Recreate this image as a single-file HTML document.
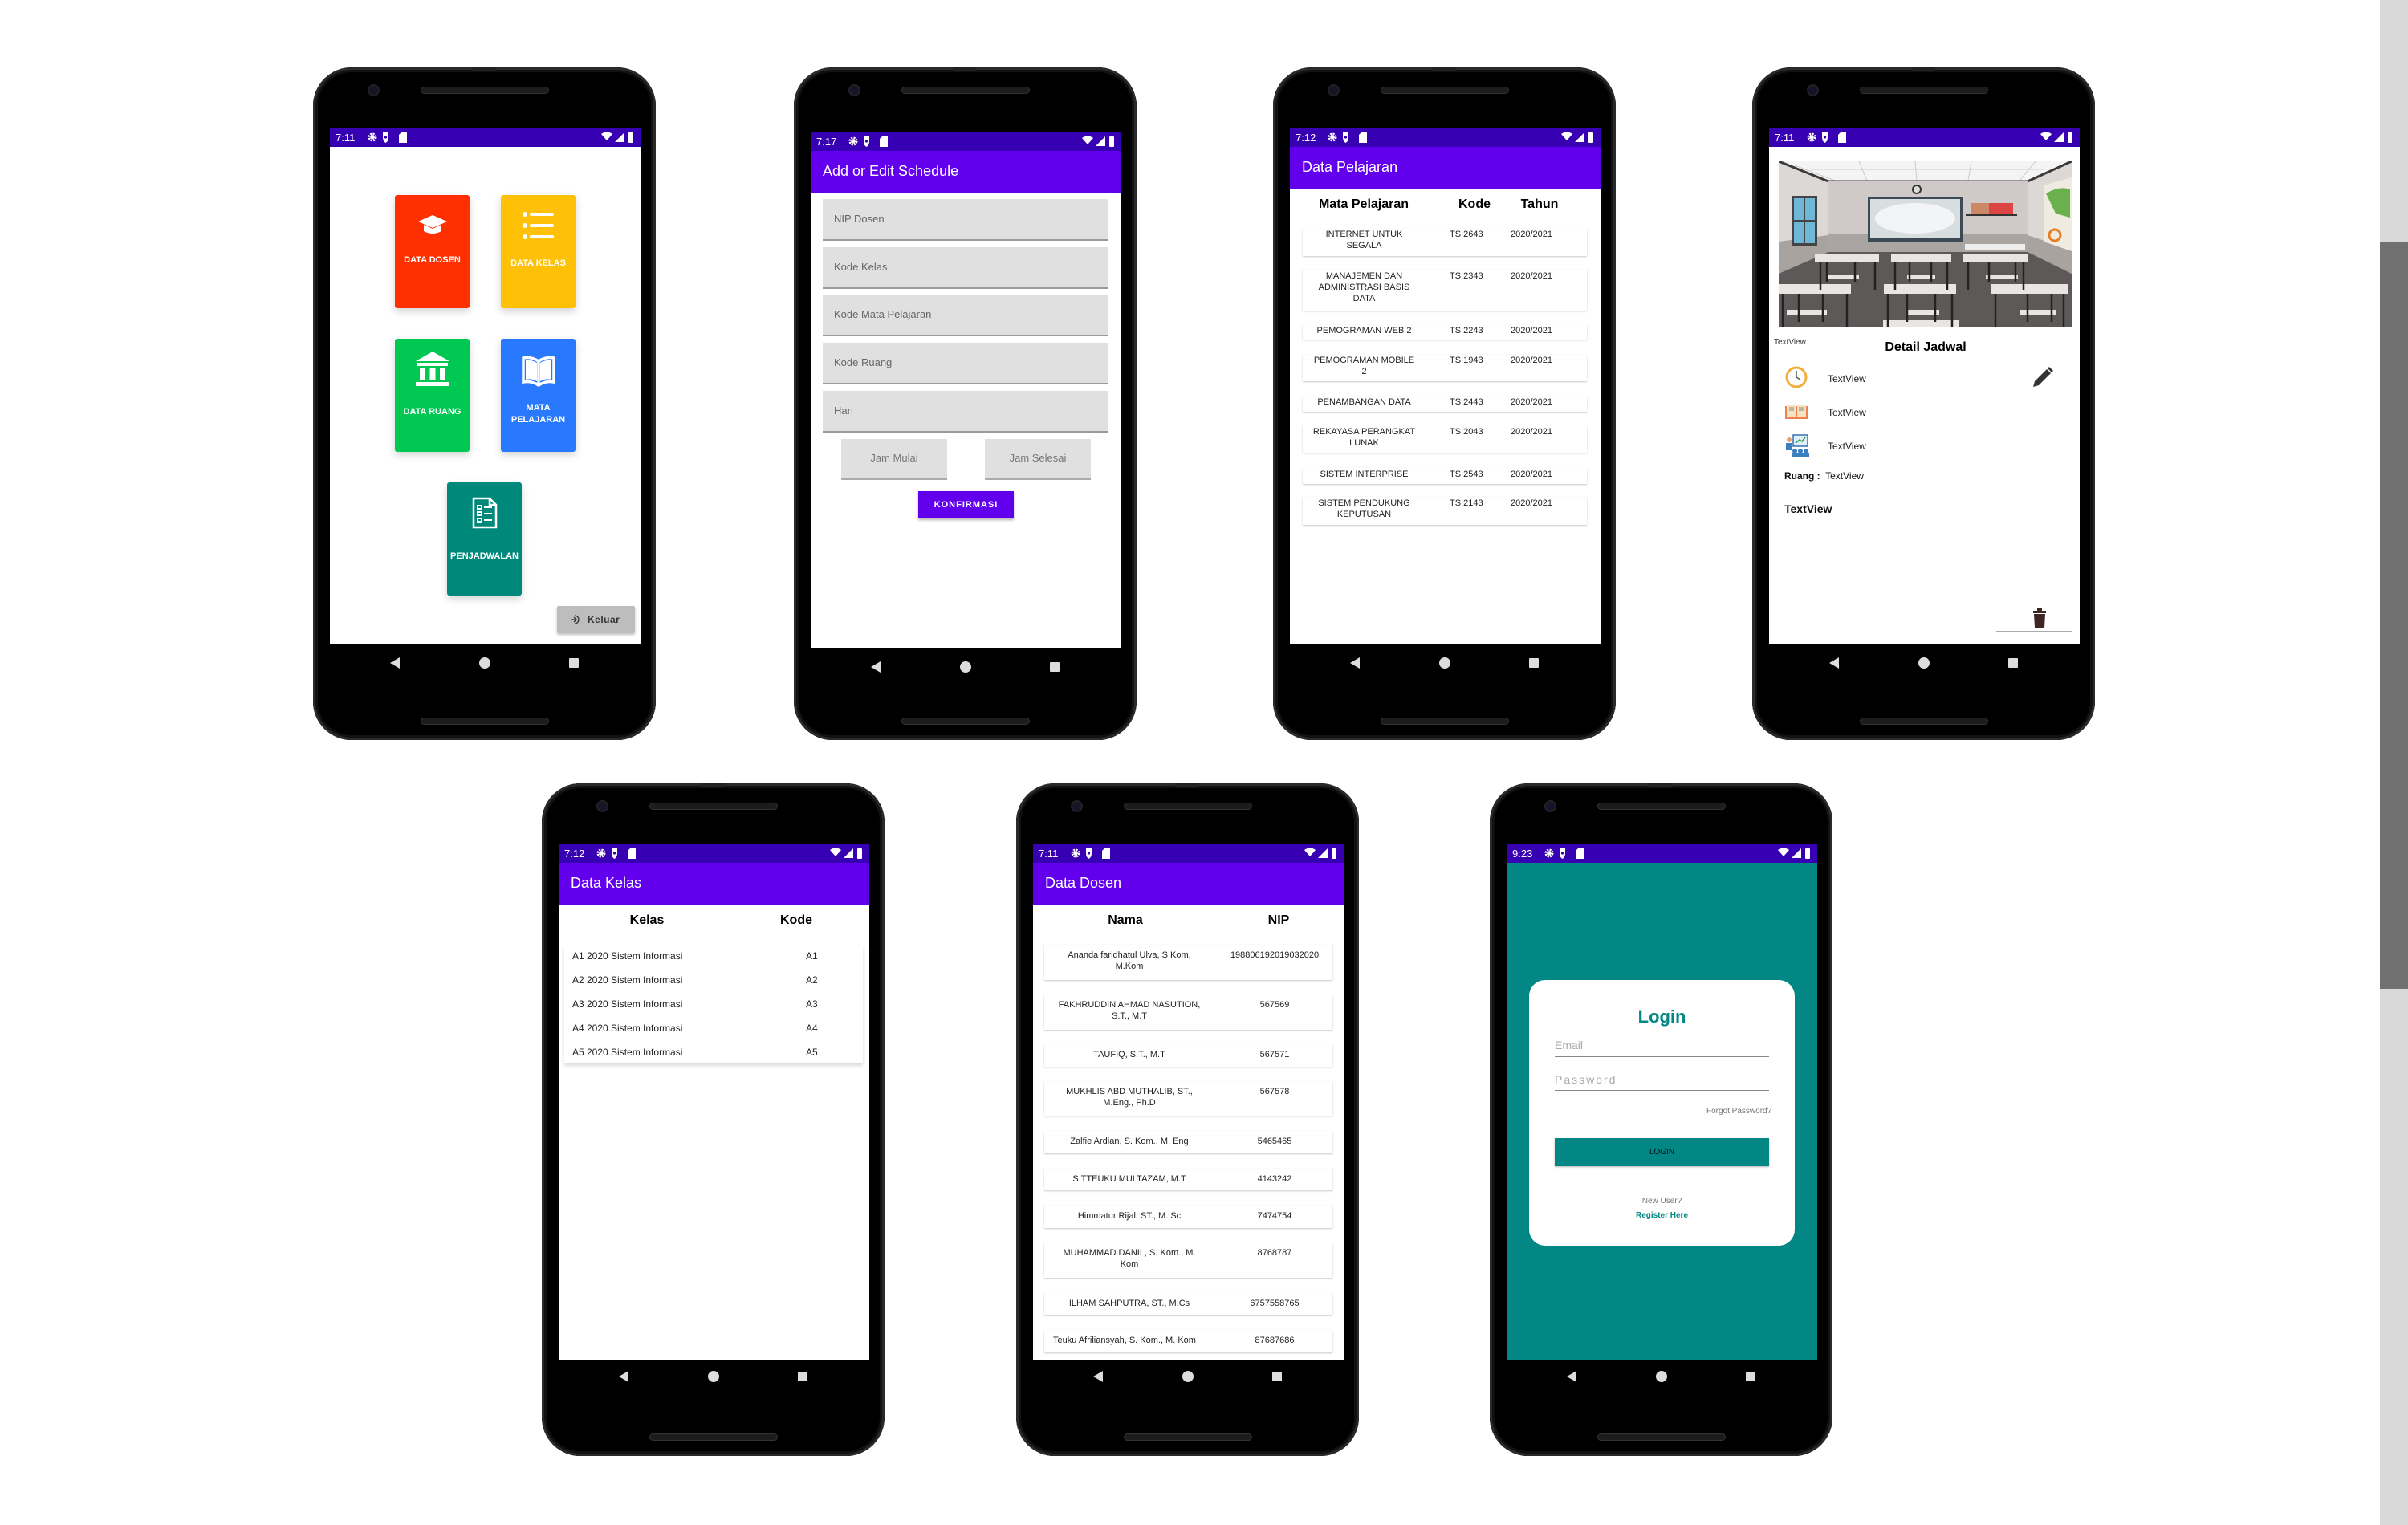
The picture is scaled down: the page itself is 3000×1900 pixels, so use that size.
<!DOCTYPE html>
<html><head><meta charset="utf-8">
<style>
*{box-sizing:border-box;margin:0;padding:0}
body{width:3000px;height:1900px;background:#fff;position:relative;overflow:hidden;font-family:"Liberation Sans",Arial,sans-serif}
.ph{position:absolute;width:427px;height:838px;background:#000;border-radius:48px;box-shadow:inset 0 0 0 3px #2a2a2a,inset 0 0 0 6px #111}
.ph .spk{position:absolute;left:134px;top:24px;width:160px;height:9px;border-radius:5px;background:#1c1c1c;border:1px solid #333}
.ph .spkb{top:810px}
.ph .cam{position:absolute;left:68px;top:21px;width:15px;height:15px;border-radius:50%;background:#15152a;border:2px solid #222}
.ph .tab{position:absolute;left:198px;top:0;width:30px;height:5px;background:#222;border-radius:0 0 4px 4px}
.scr{position:absolute;left:21px;top:76px;width:387px;height:642px;background:#fff;overflow:hidden}
.sb{position:absolute;left:0;top:0;width:100%;height:23px;background:#3700b3;color:#fff;font-size:13px}
.sb .t{position:absolute;left:7px;top:4px}
.ab{position:absolute;left:0;top:23px;width:100%;height:53px;background:#6200ee;color:#fff;font-size:18px;padding:15px 0 0 15px}
.nav{position:absolute;top:732px;left:0;width:427px;height:20px}
.a{position:absolute}
.c{position:absolute;text-align:center}
.card{position:absolute;background:#fff;box-shadow:0 1px 2px rgba(0,0,0,.22)}
.tile{position:absolute;width:93px;height:141px;border-radius:3px;box-shadow:0 4px 10px rgba(0,0,0,.18);color:#fff;font-weight:bold;font-size:11px;text-align:center}
.fld{position:absolute;left:15px;width:356px;height:52px;background:#e0e0e0;border-bottom:2px solid #9a9a9a;color:#666;font-size:13px;padding:17px 0 0 14px}
.btn{position:absolute;height:51px;width:132px;background:#e0e0e0;border-bottom:2px solid #aaa;color:#777;font-size:13px;text-align:center;padding-top:16px}
.r{font-size:11px;color:#222;line-height:14px}
</style></head><body>

<svg width="0" height="0" style="position:absolute">
<defs>
<g id="sbar">
<circle cx="53" cy="11" r="4" fill="none" stroke="#fff" stroke-width="3" stroke-dasharray="2 1.2"/><circle cx="53" cy="11" r="2.5" fill="#fff"/>
<path d="M66 5 L73 5 L73 11 Q73 16 69.5 18 Q66 16 66 11Z" fill="#fff"/><circle cx="69.5" cy="11" r="1.6" fill="#3700b3"/>
<path d="M89 5 H96 V18 H86 V8Z" fill="#fff"/>
<path d="M338 7 Q345 2 352 7 L345 15Z" fill="#fff"/>
<path d="M367 5 V17 H355Z" fill="#fff"/>
<rect x="372" y="5" width="6" height="13" rx="1" fill="#fff"/>
</g>
<g id="navg">
<path d="M108 -7 V7 L96 0Z" fill="#ddd"/><circle cx="214" cy="0" r="7" fill="#ddd"/><rect x="319" y="-6" width="12" height="12" rx="1" fill="#ddd"/>
</g>
</defs>
</svg>

<div class="a" style="left:2965px;top:0;width:35px;height:1900px;background:#d9d9d9"></div>
<div class="a" style="left:2965px;top:302px;width:35px;height:930px;background:#717171"></div>

<!-- PHONE 1 -->
<div class="ph" style="left:390px;top:84px"><div class="tab"></div><div class="cam"></div><div class="spk"></div><div class="spk spkb"></div>
<div class="scr">
<div class="sb"><span class="t">7:11</span><svg width="387" height="23" style="position:absolute;left:0;top:0"><use href="#sbar"/></svg></div>
<div class="tile" style="left:81px;top:83px;background:#ff2f00"><svg width="40" height="30" style="margin-top:22px" viewBox="0 0 40 30"><path d="M2 11 L20 3 L38 11 L20 19Z" fill="#fff"/><path d="M9 15 V23 Q20 29 31 23 V15 L20 20Z" fill="#fff"/></svg><div style="margin-top:20px">DATA DOSEN</div></div>
<div class="tile" style="left:213px;top:83px;background:#ffc107"><svg width="46" height="40" style="margin-top:18px" viewBox="0 0 46 40"><g fill="#fff"><circle cx="6" cy="6" r="3"/><circle cx="6" cy="20" r="3"/><circle cx="6" cy="34" r="3"/><rect x="12" y="4" width="30" height="4" rx="2"/><rect x="12" y="18" width="30" height="4" rx="2"/><rect x="12" y="32" width="30" height="4" rx="2"/></g></svg><div style="margin-top:18px">DATA KELAS</div></div>
<div class="tile" style="left:81px;top:262px;background:#00c853"><svg width="46" height="48" style="margin-top:14px" viewBox="0 0 46 48"><g fill="#fff"><path d="M23 2 L44 14 H2Z"/><rect x="4" y="16" width="38" height="4"/><rect x="7" y="22" width="7" height="16"/><rect x="19.5" y="22" width="7" height="16"/><rect x="32" y="22" width="7" height="16"/><rect x="2" y="40" width="42" height="5"/></g></svg><div style="margin-top:20px">DATA RUANG</div></div>
<div class="tile" style="left:213px;top:262px;background:#2979ff"><svg width="46" height="40" style="margin-top:20px" viewBox="0 0 46 40"><path d="M23 8 Q14 2 4 4 V34 Q14 32 23 38 Q32 32 42 34 V4 Q32 2 23 8Z M23 8 V38" fill="none" stroke="#fff" stroke-width="3.5"/><path d="M7 7 Q14 6 21 10 V33 Q14 29 7 31Z M25 10 Q32 6 39 7 V31 Q32 29 25 33Z" fill="#fff"/></svg><div style="margin-top:16px;line-height:15px">MATA<br>PELAJARAN</div></div>
<div class="tile" style="left:146px;top:441px;background:#00897b"><svg width="34" height="42" style="margin-top:17px" viewBox="0 0 34 42"><path d="M3 3 H23 L31 11 V39 H3Z M23 3 V11 H31" fill="none" stroke="#fff" stroke-width="2.5"/><g fill="none" stroke="#fff" stroke-width="2"><rect x="8" y="12" width="5" height="4"/><rect x="8" y="20" width="5" height="4"/><rect x="8" y="28" width="5" height="4"/><path d="M16 14 H26 M16 22 H26 M16 30 H26"/></g></svg><div style="margin-top:24px">PENJADWALAN</div></div>
<div class="a" style="left:283px;top:595px;width:97px;height:34px;background:#bdbdbd;border-radius:2px;box-shadow:0 2px 3px rgba(0,0,0,.25);font-size:12px;font-weight:bold;color:#333;padding:10px 0 0 38px;letter-spacing:.5px"><svg width="14" height="14" viewBox="0 0 14 14" style="position:absolute;left:16px;top:10px"><path d="M6 2 A5 5 0 1 1 6 12 M1 7 H8 M5 4 L8 7 L5 10" fill="none" stroke="#333" stroke-width="1.3"/></svg>Keluar</div>
</div>
<svg class="nav" viewBox="0 -10 427 20"><use href="#navg"/></svg>
</div>

<!-- PHONE 2 -->
<div class="ph" style="left:989px;top:84px"><div class="tab"></div><div class="cam"></div><div class="spk"></div><div class="spk spkb"></div>
<div class="scr" style="top:81px">
<div class="sb"><span class="t">7:17</span><svg width="387" height="23" style="position:absolute;left:0;top:0"><use href="#sbar"/></svg></div>
<div class="ab">Add or Edit Schedule</div>
<div class="fld" style="top:83px">NIP Dosen</div>
<div class="fld" style="top:143px">Kode Kelas</div>
<div class="fld" style="top:202px">Kode Mata Pelajaran</div>
<div class="fld" style="top:262px">Kode Ruang</div>
<div class="fld" style="top:322px">Hari</div>
<div class="btn" style="left:38px;top:382px">Jam Mulai</div>
<div class="btn" style="left:217px;top:382px">Jam Selesai</div>
<div class="a" style="left:134px;top:447px;width:119px;height:34px;background:#6200ee;color:#fff;font-size:11px;font-weight:bold;letter-spacing:1px;text-align:center;padding-top:11px;box-shadow:0 2px 3px rgba(0,0,0,.3)">KONFIRMASI</div>
</div>
<svg class="nav" style="top:737px" viewBox="0 -10 427 20"><use href="#navg"/></svg>
</div>

<!-- PHONE 3 -->
<div class="ph" style="left:1586px;top:84px"><div class="tab"></div><div class="cam"></div><div class="spk"></div><div class="spk spkb"></div>
<div class="scr">
<div class="sb"><span class="t">7:12</span><svg width="387" height="23" style="position:absolute;left:0;top:0"><use href="#sbar"/></svg></div>
<div class="ab">Data Pelajaran</div>
<div class="c" style="left:12px;width:160px;top:86px;font-size:16px;font-weight:bold">Mata Pelajaran</div>
<div class="c" style="left:200px;width:60px;top:86px;font-size:16px;font-weight:bold">Kode</div>
<div class="c" style="left:276px;width:70px;top:86px;font-size:16px;font-weight:bold">Tahun</div>
<div class="card" style="left:16px;top:125px;width:354px;height:34px"></div>
<div class="card" style="left:16px;top:176px;width:354px;height:51px"></div>
<div class="card" style="left:16px;top:245px;width:354px;height:18px"></div>
<div class="card" style="left:16px;top:282px;width:354px;height:33px"></div>
<div class="card" style="left:16px;top:334px;width:354px;height:19px"></div>
<div class="card" style="left:16px;top:370px;width:354px;height:34px"></div>
<div class="card" style="left:16px;top:423px;width:354px;height:20px"></div>
<div class="card" style="left:16px;top:459px;width:354px;height:35px"></div>
<div class="c r" style="left:20px;width:145px;top:125px">INTERNET UNTUK<br>SEGALA</div>
<div class="c r" style="left:20px;width:145px;top:177px">MANAJEMEN DAN<br>ADMINISTRASI BASIS<br>DATA</div>
<div class="c r" style="left:20px;width:145px;top:245px">PEMOGRAMAN WEB 2</div>
<div class="c r" style="left:20px;width:145px;top:282px">PEMOGRAMAN MOBILE<br>2</div>
<div class="c r" style="left:20px;width:145px;top:334px">PENAMBANGAN DATA</div>
<div class="c r" style="left:20px;width:145px;top:371px">REKAYASA PERANGKAT<br>LUNAK</div>
<div class="c r" style="left:20px;width:145px;top:424px">SISTEM INTERPRISE</div>
<div class="c r" style="left:20px;width:145px;top:460px">SISTEM PENDUKUNG<br>KEPUTUSAN</div>
<div class="a r" style="left:199px;top:125px">TSI2643</div><div class="a r" style="left:275px;top:125px">2020/2021</div>
<div class="a r" style="left:199px;top:177px">TSI2343</div><div class="a r" style="left:275px;top:177px">2020/2021</div>
<div class="a r" style="left:199px;top:245px">TSI2243</div><div class="a r" style="left:275px;top:245px">2020/2021</div>
<div class="a r" style="left:199px;top:282px">TSI1943</div><div class="a r" style="left:275px;top:282px">2020/2021</div>
<div class="a r" style="left:199px;top:334px">TSI2443</div><div class="a r" style="left:275px;top:334px">2020/2021</div>
<div class="a r" style="left:199px;top:371px">TSI2043</div><div class="a r" style="left:275px;top:371px">2020/2021</div>
<div class="a r" style="left:199px;top:424px">TSI2543</div><div class="a r" style="left:275px;top:424px">2020/2021</div>
<div class="a r" style="left:199px;top:460px">TSI2143</div><div class="a r" style="left:275px;top:460px">2020/2021</div>
</div>
<svg class="nav" viewBox="0 -10 427 20"><use href="#navg"/></svg>
</div>

<!-- PHONE 4 -->
<div class="ph" style="left:2183px;top:84px"><div class="tab"></div><div class="cam"></div><div class="spk"></div><div class="spk spkb"></div>
<div class="scr">
<div class="sb"><span class="t">7:11</span><svg width="387" height="23" style="position:absolute;left:0;top:0"><use href="#sbar"/></svg></div>
<svg class="a" style="left:12px;top:41px" width="365" height="206" viewBox="0 0 365 206">
<rect width="365" height="206" fill="#dcd8d5"/>
<path d="M0 0 H365 L310 25 H62Z" fill="#f4f4f4"/>
<g stroke="#ccc" stroke-width="1"><path d="M40 10 H330 M20 5 L70 24 M100 0 L110 24 M170 0 L172 24 M240 0 L236 24 M320 0 L300 24"/></g>
<path d="M0 0 L62 25 H310 L365 0" fill="none" stroke="#3a3a3a" stroke-width="3"/>
<rect x="62" y="25" width="248" height="90" fill="#cfcac7"/>
<rect x="62" y="90" width="248" height="25" fill="#aaa5a2"/>
<path d="M0 100 L62 92 V115 L0 140Z" fill="#a8a39f"/><path d="M365 110 L310 92 V115 L365 140Z" fill="#a8a39f"/>
<path d="M0 140 L62 113 H310 L365 140 V206 H0Z" fill="#5d5959"/>
<rect x="16" y="43" width="32" height="62" fill="#444"/><rect x="19" y="46" width="26" height="56" fill="#6fb7d8"/><path d="M32 46 V102 M19 74 H45" stroke="#444" stroke-width="2"/>
<rect x="111" y="45" width="118" height="55" fill="#3c4a55"/><rect x="114" y="47" width="112" height="48" fill="#d8dde0"/><ellipse cx="170" cy="71" rx="50" ry="19" fill="#f2f4f5"/>
<circle cx="172" cy="35" r="6" fill="#333"/><circle cx="172" cy="35" r="4" fill="#ddd"/>
<rect x="233" y="65" width="64" height="3" fill="#333"/><rect x="240" y="52" width="40" height="13" fill="#c86"/><rect x="262" y="52" width="30" height="13" fill="#d44"/>
<path d="M330 30 L365 20 V112 L330 100Z" fill="#efebe0"/><path d="M333 40 Q350 30 363 35 V70 L345 65Z" fill="#6ab04c"/><circle cx="344" cy="92" r="7" fill="none" stroke="#e67e22" stroke-width="3"/>
<rect x="232" y="103" width="75" height="8" fill="#eee"/>
<g fill="#e8e5e3">
<rect x="45" y="115" width="80" height="10"/><rect x="140" y="115" width="75" height="10"/><rect x="230" y="115" width="80" height="10"/>
<rect x="0" y="153" width="90" height="12"/><rect x="131" y="153" width="90" height="12"/><rect x="265" y="153" width="95" height="12"/>
<rect x="60" y="142" width="40" height="5"/><rect x="160" y="142" width="35" height="5"/><rect x="258" y="142" width="40" height="5"/>
<rect x="10" y="185" width="50" height="6"/><rect x="160" y="185" width="40" height="6"/><rect x="300" y="185" width="45" height="6"/>
<rect x="130" y="198" width="95" height="8"/>
</g>
<g stroke="#222" stroke-width="2.5"><path d="M52 125 V160 M120 125 V160 M145 125 V160 M210 125 V160 M236 125 V160 M305 125 V160 M5 165 V206 M85 165 V206 M136 165 V206 M216 165 V206 M270 165 V206 M355 165 V206 M60 125 V150 M95 125 V150 M163 125 V150 M190 125 V150 M262 125 V150 M295 125 V150 M25 165 V200 M55 165 V200 M160 165 V200 M195 165 V200 M310 165 V200 M340 165 V200"/></g>
</svg>
<div class="a" style="left:6px;top:261px;font-size:10px;color:#333">TextView</div>
<div class="c" style="left:95px;width:200px;top:264px;font-size:16px;font-weight:bold">Detail Jadwal</div>
<svg class="a" style="left:20px;top:296px" width="28" height="28" viewBox="0 0 28 28"><circle cx="14" cy="14" r="12" fill="#fff" stroke="#f0b040" stroke-width="3"/><path d="M14 6 V14 L19 17" stroke="#555" stroke-width="1.5" fill="none"/></svg>
<svg class="a" style="left:18px;top:342px" width="32" height="22" viewBox="0 0 32 22"><rect x="2" y="4" width="28" height="16" fill="#f08050"/><rect x="4" y="2" width="11" height="15" fill="#f3e3c0"/><rect x="17" y="2" width="11" height="15" fill="#f3e3c0"/><path d="M7 6 H13 M7 9 H13 M19 6 H26 M19 9 H26" stroke="#888"/></svg>
<svg class="a" style="left:18px;top:380px" width="32" height="30" viewBox="0 0 32 30"><rect x="12" y="2" width="18" height="14" fill="#dfeefa" stroke="#3a6fb0" stroke-width="1.5"/><path d="M15 12 L20 8 L23 10 L27 5" stroke="#2a9a4a" fill="none" stroke-width="1.5"/><circle cx="7" cy="8" r="3" fill="#e8a070"/><rect x="3" y="12" width="8" height="9" fill="#3a7fc0"/><g fill="#3a7fc0"><circle cx="14" cy="22" r="3"/><circle cx="21" cy="22" r="3"/><circle cx="28" cy="22" r="3"/><rect x="10" y="25" width="22" height="5"/></g></svg>
<div class="a" style="left:73px;top:305px;font-size:12px;color:#222">TextView</div>
<div class="a" style="left:73px;top:347px;font-size:12px;color:#222">TextView</div>
<div class="a" style="left:73px;top:389px;font-size:12px;color:#222">TextView</div>
<svg class="a" style="left:325px;top:296px" width="30" height="30" viewBox="0 0 30 30"><path d="M4 26 L6 19 L21 4 L26 9 L11 24Z" fill="#333"/><path d="M22 3 L24 1 L29 6 L27 8Z" fill="#333"/></svg>
<div class="a" style="left:19px;top:426px;font-size:12px;color:#111"><b>Ruang :</b>&nbsp; TextView</div>
<div class="a" style="left:19px;top:466px;font-size:14px;font-weight:bold;color:#111">TextView</div>
<svg class="a" style="left:327px;top:597px" width="20" height="26" viewBox="0 0 20 26"><rect x="2" y="4" width="16" height="3" fill="#3e2723"/><rect x="7" y="1" width="6" height="3" fill="#3e2723"/><path d="M3 8 H17 L16 25 H4Z" fill="#3e2723"/></svg>
<div class="a" style="left:283px;top:626px;width:95px;height:2px;background:#aaa"></div>
</div>
<svg class="nav" viewBox="0 -10 427 20"><use href="#navg"/></svg>
</div>

<!-- PHONE 5 -->
<div class="ph" style="left:675px;top:976px"><div class="tab"></div><div class="cam"></div><div class="spk"></div><div class="spk spkb"></div>
<div class="scr">
<div class="sb"><span class="t">7:12</span><svg width="387" height="23" style="position:absolute;left:0;top:0"><use href="#sbar"/></svg></div>
<div class="ab">Data Kelas</div>
<div class="c" style="left:60px;width:100px;top:86px;font-size:16px;font-weight:bold">Kelas</div>
<div class="c" style="left:266px;width:60px;top:86px;font-size:16px;font-weight:bold">Kode</div>
<div class="card" style="left:7px;top:126px;width:372px;height:147px;box-shadow:0 3px 5px rgba(0,0,0,.15)"></div>
<div class="a" style="left:17px;top:124px;font-size:12px;line-height:30px;color:#222">A1 2020 Sistem Informasi<br>A2 2020 Sistem Informasi<br>A3 2020 Sistem Informasi<br>A4 2020 Sistem Informasi<br>A5 2020 Sistem Informasi</div>
<div class="a" style="left:308px;top:124px;font-size:12px;line-height:30px;color:#222">A1<br>A2<br>A3<br>A4<br>A5</div>
</div>
<svg class="nav" style="top:729px" viewBox="0 -10 427 20"><use href="#navg"/></svg>
</div>

<!-- PHONE 6 -->
<div class="ph" style="left:1266px;top:976px"><div class="tab"></div><div class="cam"></div><div class="spk"></div><div class="spk spkb"></div>
<div class="scr">
<div class="sb"><span class="t">7:11</span><svg width="387" height="23" style="position:absolute;left:0;top:0"><use href="#sbar"/></svg></div>
<div class="ab">Data Dosen</div>
<div class="c" style="left:65px;width:100px;top:86px;font-size:16px;font-weight:bold">Nama</div>
<div class="c" style="left:271px;width:70px;top:86px;font-size:16px;font-weight:bold">NIP</div>
<div class="card" style="left:14px;top:125px;width:359px;height:44px"></div>
<div class="card" style="left:14px;top:187px;width:359px;height:44px"></div>
<div class="card" style="left:14px;top:249px;width:359px;height:28px"></div>
<div class="card" style="left:14px;top:295px;width:359px;height:43px"></div>
<div class="card" style="left:14px;top:357px;width:359px;height:28px"></div>
<div class="card" style="left:14px;top:404px;width:359px;height:27px"></div>
<div class="card" style="left:14px;top:450px;width:359px;height:28px"></div>
<div class="card" style="left:14px;top:496px;width:359px;height:44px"></div>
<div class="card" style="left:14px;top:559px;width:359px;height:27px"></div>
<div class="card" style="left:14px;top:605px;width:359px;height:28px"></div>
<div class="c r" style="left:14px;width:212px;top:131px">Ananda faridhatul Ulva, S.Kom,<br>M.Kom</div>
<div class="c r" style="left:14px;width:212px;top:193px">FAKHRUDDIN AHMAD NASUTION,<br>S.T., M.T</div>
<div class="c r" style="left:14px;width:212px;top:255px">TAUFIQ, S.T., M.T</div>
<div class="c r" style="left:14px;width:212px;top:301px">MUKHLIS ABD MUTHALIB, ST.,<br>M.Eng., Ph.D</div>
<div class="c r" style="left:14px;width:212px;top:363px">Zalfie Ardian, S. Kom., M. Eng</div>
<div class="c r" style="left:14px;width:212px;top:410px">S.TTEUKU MULTAZAM, M.T</div>
<div class="c r" style="left:14px;width:212px;top:456px">Himmatur Rijal, ST., M. Sc</div>
<div class="c r" style="left:14px;width:212px;top:502px">MUHAMMAD DANIL, S. Kom., M.<br>Kom</div>
<div class="c r" style="left:14px;width:212px;top:565px">ILHAM SAHPUTRA, ST., M.Cs</div>
<div class="c r" style="left:8px;width:212px;top:611px">Teuku Afriliansyah, S. Kom., M. Kom</div>
<div class="c r" style="left:236px;width:130px;top:131px">198806192019032020</div>
<div class="c r" style="left:236px;width:130px;top:193px">567569</div>
<div class="c r" style="left:236px;width:130px;top:255px">567571</div>
<div class="c r" style="left:236px;width:130px;top:301px">567578</div>
<div class="c r" style="left:236px;width:130px;top:363px">5465465</div>
<div class="c r" style="left:236px;width:130px;top:410px">4143242</div>
<div class="c r" style="left:236px;width:130px;top:456px">7474754</div>
<div class="c r" style="left:236px;width:130px;top:502px">8768787</div>
<div class="c r" style="left:236px;width:130px;top:565px">6757558765</div>
<div class="c r" style="left:236px;width:130px;top:611px">87687686</div>
</div>
<svg class="nav" style="top:729px" viewBox="0 -10 427 20"><use href="#navg"/></svg>
</div>

<!-- PHONE 7 -->
<div class="ph" style="left:1856px;top:976px"><div class="tab"></div><div class="cam"></div><div class="spk"></div><div class="spk spkb"></div>
<div class="scr" style="background:#028784">
<div class="sb"><span class="t">9:23</span><svg width="387" height="23" style="position:absolute;left:0;top:0"><use href="#sbar"/></svg></div>
<div class="a" style="left:28px;top:169px;width:331px;height:331px;background:#fff;border-radius:20px"></div>
<div class="c" style="left:28px;width:331px;top:202px;font-size:22px;font-weight:bold;color:#028784">Login</div>
<div class="a" style="left:60px;top:242px;font-size:14px;color:#aaa">Email</div>
<div class="a" style="left:60px;top:264px;width:267px;height:1px;background:#888"></div>
<div class="a" style="left:60px;top:285px;font-size:14px;color:#aaa;letter-spacing:2px">Password</div>
<div class="a" style="left:60px;top:306px;width:267px;height:1px;background:#888"></div>
<div class="a" style="left:249px;top:327px;font-size:10px;color:#777">Forgot Password?</div>
<div class="a" style="left:60px;top:366px;width:267px;height:35px;background:#028784;box-shadow:0 1px 2px rgba(0,0,0,.3);font-size:10px;color:#111;text-align:center;padding-top:12px">LOGIN</div>
<div class="c" style="left:28px;width:331px;top:439px;font-size:10px;color:#777">New User?</div>
<div class="c" style="left:28px;width:331px;top:457px;font-size:10px;font-weight:bold;color:#028784">Register Here</div>
</div>
<svg class="nav" style="top:729px" viewBox="0 -10 427 20"><use href="#navg"/></svg>
</div>

</body></html>
